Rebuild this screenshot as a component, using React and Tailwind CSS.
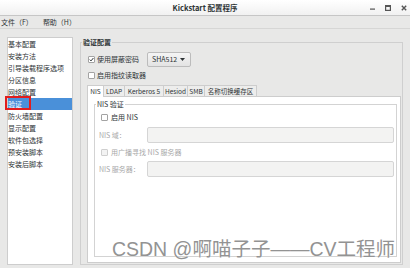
import React from 'react';

const items = ['基本配置', '安装方法', '引导装载程序选项', '分区信息', '网络配置', '验证', '防火墙配置', '显示配置', '软件包选择', '预安装脚本', '安装后脚本'];

const tabs = [
  { label: 'NIS', w: 'w-[17px]' },
  { label: 'LDAP', w: 'w-[21px]' },
  { label: 'Kerberos 5', w: 'w-[39px]' },
  { label: 'Hesiod', w: 'w-[24px]' },
  { label: 'SMB', w: 'w-[17px]' },
  { label: '名称切换缓存区', w: 'w-[52px]' },
];

const Check = ({ checked, disabled }) => (
  <span
    className={`w-[7px] h-[7px] rounded-[1px] border flex items-center justify-center shrink-0 ${
      disabled ? 'border-[#cfcfcf] bg-[#f3f3f3]' : 'border-[#a3a3a3] bg-white'
    }`}
  >
    {checked && (
      <svg width="5" height="5" viewBox="0 0 10 10">
        <path d="M1.5 5.2 L4 7.8 L8.8 2" fill="none" stroke="#2e3436" strokeWidth="2" />
      </svg>
    )}
  </span>
);

export default function App() {
  return (
    <div className="w-[410px] h-[268px] relative overflow-hidden bg-[#e8e8e7] text-[7px] leading-none text-[#2e3436] font-['Liberation_Sans_Narrow','Noto_Sans_CJK_SC',sans-serif] flex flex-col">
      {/* title bar */}
      <div className="h-[16px] shrink-0 grid grid-cols-[1fr_auto_1fr] items-center bg-gradient-to-b from-white to-[#f1f1f1] border-b border-[#c6c6c6]">
        <div />
        <div className="font-bold text-[7.5px]">Kickstart 配置程序</div>
        <div className="flex justify-end items-center gap-[10px] pr-[3px]">
          <svg width="5" height="5" viewBox="0 0 5 5"><rect x="0" y="3.5" width="5" height="1.2" fill="#555" /></svg>
          <svg width="6" height="6" viewBox="0 0 6 6"><rect x="0.6" y="0.6" width="4.8" height="4.8" fill="none" stroke="#555" strokeWidth="1.2" /><rect x="0" y="0" width="6" height="2" fill="#555" /></svg>
          <svg width="6" height="6" viewBox="0 0 6 6"><path d="M0.8 0.8 L5.2 5.2 M5.2 0.8 L0.8 5.2" stroke="#555" strokeWidth="1.4" /></svg>
        </div>
      </div>

      {/* menu bar */}
      <div className="h-[13px] shrink-0 flex items-center gap-[10px] pl-[1px] border-b border-[#d6d6d5]">
        <span>文件（F）</span>
        <span>帮助（H）</span>
      </div>

      {/* body */}
      <div className="flex pl-[7px] pt-[8px]">
        <div className="w-[66px] h-[228px] bg-white border border-[#cdcdcd]">
          {items.map((it) => (
            <div
              key={it}
              className={`h-[12px] flex items-center ${it === '验证' ? 'bg-[#4a90d9] text-white' : ''}`}
            >
              <span className="relative">
                {it}
                {it === '验证' && (
                  <span className="absolute -left-[3px] -top-[5px] w-[26px] h-[14px] border-2 border-[#e21d1d]" />
                )}
              </span>
            </div>
          ))}
        </div>

        <fieldset className="ml-[7px] w-[323px] h-[228px] border border-[#cfcfcf] pl-[1px] pb-[1px]">
          <legend className="font-bold px-[1px] leading-[10px]">验证配置</legend>
          <div className="pl-[5px] flex flex-col">
            <div className="mt-[5px] h-[15px] flex items-center">
              <span className="ml-[1px]"><Check checked /></span>
              <span className="ml-[2px]">使用屏蔽密码</span>
              <div className="ml-[8px] w-[44px] h-[15px] border border-[#bcbcbc] rounded-[2px] bg-gradient-to-b from-[#f5f5f5] to-[#e3e3e3] flex items-center justify-between pl-[4px] pr-[5px]">
                <span>SHA512</span>
                <svg width="5" height="3" viewBox="0 0 5 3"><path d="M0 0 H5 L2.5 3 Z" fill="#2e3436" /></svg>
              </div>
            </div>
            <div className="mt-[1px] h-[14px] flex items-center">
              <span className="ml-[1px]"><Check /></span>
              <span className="ml-[2px]">启用指纹读取器</span>
            </div>

            {/* notebook */}
            <div className="mt-[3px] flex flex-col">
              <div className="flex h-[12px]">
                {tabs.map((t, i) => (
                  <div
                    key={t.label}
                    className={`${t.w} h-[12px] flex items-center justify-center whitespace-nowrap overflow-hidden text-[6.5px] border-t border-r border-[#cdcdcd] ${
                      i === 0 ? 'bg-white border-l' : 'bg-[#ededec] border-b'
                    }`}
                  >
                    {t.label}
                  </div>
                ))}
              </div>
              <div className="h-[166px] bg-white border border-t-0 border-[#cdcdcd] mr-[1px] relative">
                <div className="absolute top-[-1px] left-[169px] right-[-1px] border-t border-[#cdcdcd]" />
                <fieldset className="ml-[6px] mt-[3px] w-[303px] h-[157px] border border-[#d3d3d3] pl-[1px] pr-[2px]">
                  <legend className="px-[1px] leading-[8px]">NIS 验证</legend>
                  <div className="mt-[3px] h-[12px] flex items-center">
                    <span className="ml-[5px]"><Check /></span>
                    <span className="ml-[3px]">启用 NIS</span>
                  </div>
                  <div className="mt-[4px] h-[16px] flex items-center text-[#a8a8a8]">
                    <span className="ml-[3px] w-[48px]">NIS 域：</span>
                    <div className="flex-1 h-[16px] bg-[#f3f3f2] border border-[#d5d5d5] rounded-[2px]" />
                  </div>
                  <div className="mt-[3px] h-[12px] flex items-center text-[#a8a8a8]">
                    <span className="ml-[5px]"><Check disabled /></span>
                    <span className="ml-[3px]">用广播寻找 NIS 服务器</span>
                  </div>
                  <div className="mt-[3px] h-[16px] flex items-center text-[#a8a8a8]">
                    <span className="ml-[3px] w-[48px]">NIS 服务器：</span>
                    <div className="flex-1 h-[16px] bg-[#f3f3f2] border border-[#d5d5d5] rounded-[2px]" />
                  </div>
                </fieldset>
              </div>
            </div>
          </div>
        </fieldset>
      </div>

      {/* watermark */}
      <div className="absolute right-[15px] bottom-[9px] text-[19.5px] leading-none text-[#939393] font-['Liberation_Sans','Noto_Sans_CJK_SC',sans-serif] [text-shadow:0_0_1px_#ffffff]">
        CSDN @啊喵子子——CV工程师
      </div>
    </div>
  );
}
